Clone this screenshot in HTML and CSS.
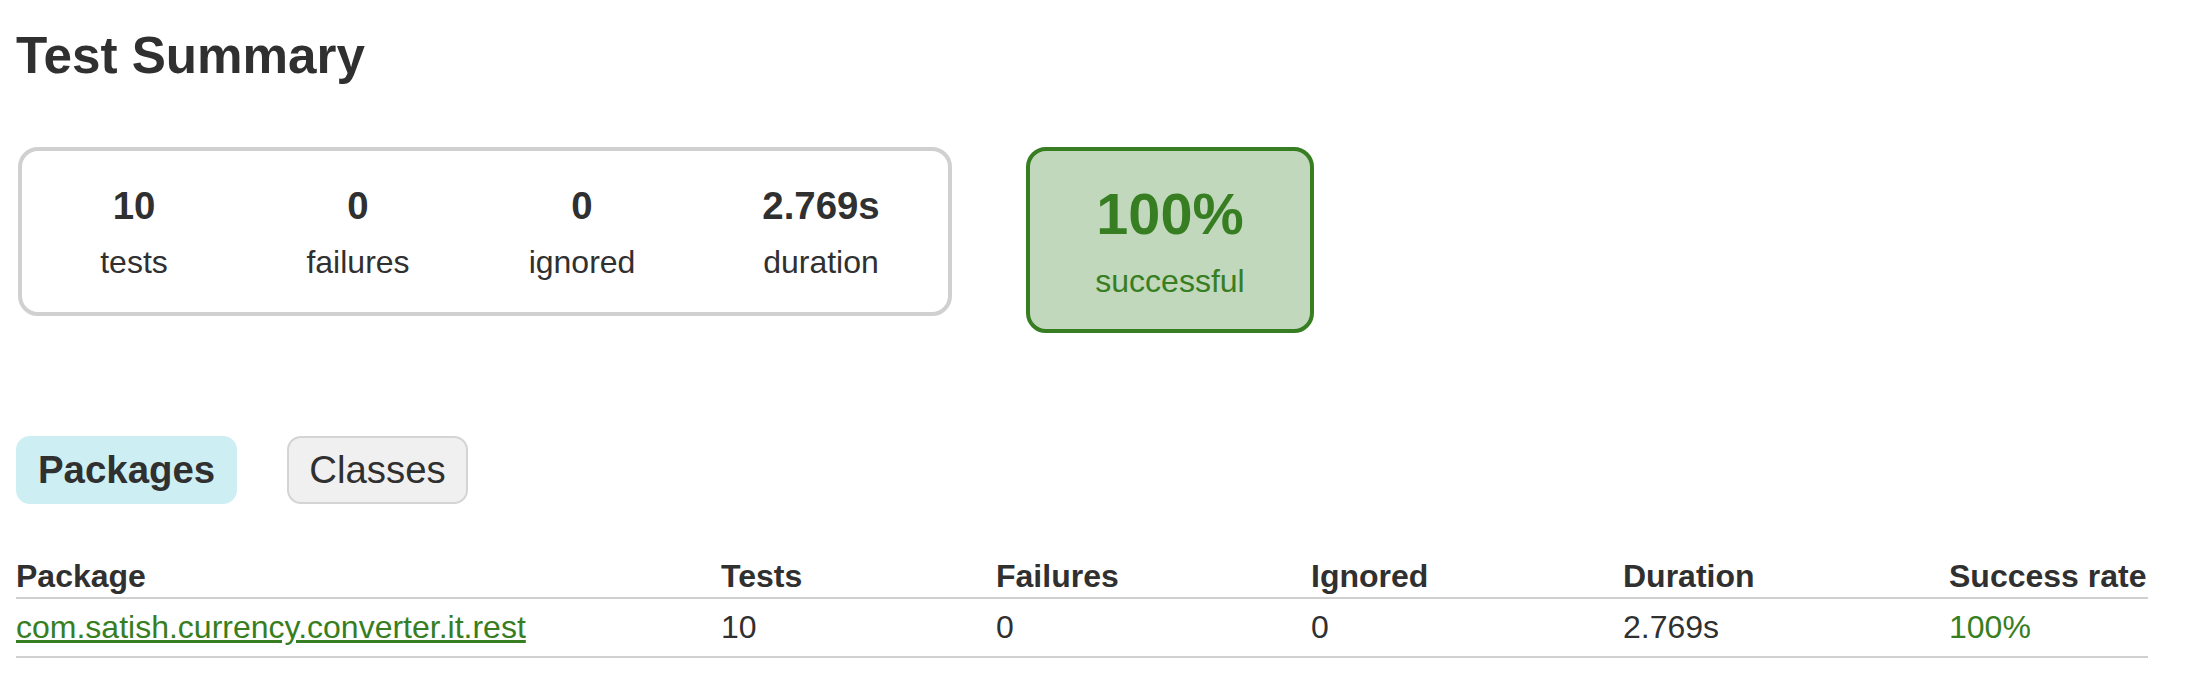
FILE: index.html
```html
<!DOCTYPE html>
<html lang="en">
<head>
<meta charset="utf-8">
<title>Test results - Test Summary</title>
<link rel="stylesheet" href="styles.css">
</head>
<body>
<div class="content">
  <h1 class="title">Test Summary</h1>
  <div class="summary">
    <div class="summary-group">
      <div class="info-box">
        <div class="counter">10</div>
        <p class="label">tests</p>
      </div>
      <div class="info-box">
        <div class="counter">0</div>
        <p class="label">failures</p>
      </div>
      <div class="info-box">
        <div class="counter">0</div>
        <p class="label">ignored</p>
      </div>
      <div class="info-box info-duration">
        <div class="counter">2.769s</div>
        <p class="label">duration</p>
      </div>
    </div>
    <div class="success-rate">
      <div class="percent">100%</div>
      <p class="label">successful</p>
    </div>
  </div>

  <ul class="tab-links">
    <li class="tab selected"><a class="tab-link">Packages</a></li>
    <li class="tab"><a class="tab-link">Classes</a></li>
  </ul>

  <table class="results">
    <thead>
      <tr>
        <th class="col-package">Package</th>
        <th class="col-tests">Tests</th>
        <th class="col-failures">Failures</th>
        <th class="col-ignored">Ignored</th>
        <th class="col-duration">Duration</th>
        <th class="col-rate">Success rate</th>
      </tr>
    </thead>
    <tbody>
      <tr>
        <td class="success"><a class="pkg-link" href="#">com.satish.currency.converter.it.rest</a></td>
        <td>10</td>
        <td>0</td>
        <td>0</td>
        <td>2.769s</td>
        <td class="success">100%</td>
      </tr>
    </tbody>
  </table>
</div>
</body>
</html>
```

FILE: styles.css
```css
html, body {
  margin: 0;
  padding: 0;
  background: #ffffff;
}

body {
  font-family: "Liberation Sans", Arial, Helvetica, sans-serif;
  font-size: 32px;
  color: #303030;
}

.content {
  padding: 27px 40px 0 16px;
}

.title {
  margin: 0;
  font-size: 51.2px;
  line-height: 58px;
  font-weight: bold;
  white-space: nowrap;
}

/* ---- summary ---- */
.summary {
  display: flex;
  align-items: flex-start;
  margin-top: 62px;
}

.summary-group {
  display: flex;
  margin-left: 2px;
  border: 4px solid #d0d0d0;
  border-radius: 20px;
}

.info-box {
  width: 220px;
  margin: 2px;
  padding: 30px 0;
  text-align: center;
}

.info-duration {
  width: 250px;
}

.counter {
  font-size: 38.4px;
  line-height: 45px;
  font-weight: bold;
  margin-bottom: 16px;
}

.label {
  margin: 0;
  line-height: 36px;
}

.success-rate {
  width: 280px;
  margin-left: 74px;
  padding: 30px 0;
  text-align: center;
  border: 4px solid #377e22;
  border-radius: 20px;
  background: #c1d8bd;
  color: #377e22;
}

.percent {
  font-size: 57.6px;
  line-height: 66px;
  font-weight: bold;
  margin-bottom: 16px;
}

/* ---- tabs ---- */
.tab-links {
  display: flex;
  gap: 50px;
  list-style: none;
  margin: 83px 0 32px 0;
  padding: 20px 0;
}

.tab {
  padding: 10px 20px;
  border: 2px solid #d4d4d4;
  border-radius: 14px;
  background: #f0f0f0;
}

.tab.selected {
  background: #cdeff4;
  border-color: #cdeff4;
}

.tab-link {
  display: block;
  font-size: 38.4px;
  line-height: 44px;
  color: #303030;
  text-decoration: none;
}

.tab.selected .tab-link {
  font-weight: bold;
}

/* ---- table ---- */
.results {
  border-collapse: collapse;
  border-bottom: 2px solid #d0d0d0;
}

.results th {
  text-align: left;
  white-space: nowrap;
  font-weight: bold;
  line-height: 37px;
  padding: 2px 0 2px 192px;
  border-bottom: 2px solid #d0d0d0;
}

.results td {
  white-space: nowrap;
  line-height: 37px;
  padding: 10px 0 10px 192px;
}

.results th:first-child,
.results td:first-child {
  padding-left: 0;
}

.col-package { width: 513px; }
.col-tests { width: 83px; }
.col-failures { width: 123px; }
.col-ignored { width: 120px; }
.col-duration { width: 134px; }
.col-rate { width: 199px; }

.success,
.pkg-link {
  color: #377e22;
}

.pkg-link {
  text-decoration: underline;
}
```
